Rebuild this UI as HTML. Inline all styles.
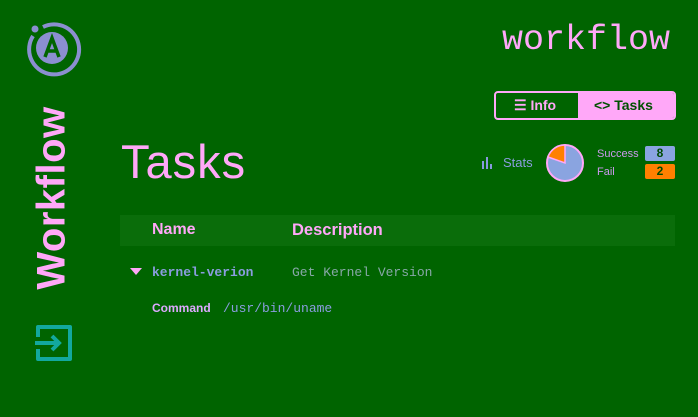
<!DOCTYPE html>
<html><head><style>
body{margin:0;width:698px;height:417px;background:#006400;overflow:hidden;position:relative;font-family:"Liberation Sans",sans-serif}
.a{position:absolute;white-space:nowrap}
.mono{font-family:"Liberation Mono",monospace}
</style></head><body>
<svg class="a" style="left:22px;top:18px" width="60" height="60" viewBox="0 0 60 60">
<path d="M11 18 A25 25 0 1 0 21 9" fill="none" stroke="#8b8fd0" stroke-width="4"/>
<circle cx="13" cy="11" r="3.5" fill="#8b8fd0"/>
<circle cx="30" cy="30" r="16" fill="#8b8fd0"/>
<path d="M23 39 L30 20 L37 39 M26 33 H34" fill="none" stroke="#006400" stroke-width="3.5"/>
</svg>
<div class="a" style="left:52px;top:198px;transform:translate(-50%,-50%) rotate(-90deg);color:#ffa8f8;font-weight:bold;font-size:40px;letter-spacing:0.5px">Workflow</div>
<svg class="a" style="left:35px;top:324px" width="38" height="38" viewBox="0 0 38 38">
<path d="M3 13 V3 H35 V35 H3 V25" fill="none" stroke="#13a89e" stroke-width="4" stroke-linejoin="round"/>
<path d="M0 19 H24 M17 12 L24 19 L17 26" fill="none" stroke="#13a89e" stroke-width="4"/>
</svg>
<div class="a mono" style="left:502px;top:19px;color:#ffa8f8;font-size:35px;line-height:42px">workflow</div>
<div class="a" style="left:494px;top:91px;width:178px;height:25px;border:2px solid #ffa8f8;border-radius:4px;overflow:hidden">
<div class="a" style="left:0;top:0;width:82px;height:25px;color:#ffa8f8;font-weight:bold;font-size:14px;line-height:25px"><span style="margin-left:18px">☰ Info</span></div>
<div class="a" style="left:82px;top:0;width:96px;height:25px;background:#ffa8f8;color:#005000;font-weight:bold;font-size:14px;line-height:25px"><span style="margin-left:16px">&lt;&gt; Tasks</span></div>
</div>
<div class="a" style="left:121px;top:136px;color:#ffa8f8;font-size:47px;font-weight:300;line-height:52px;letter-spacing:1px">Tasks</div>
<svg class="a" style="left:482px;top:156px" width="12" height="13"><rect x="0" y="5" width="2" height="8" fill="#8899dd"/><rect x="4" y="1" width="2" height="12" fill="#8899dd"/><rect x="8" y="8" width="2" height="5" fill="#8899dd"/></svg>
<div class="a" style="left:503px;top:155px;color:#8b9de0;font-size:13px">Stats</div>
<svg class="a" style="left:545px;top:143px" width="40" height="40" viewBox="0 0 40 40">
<circle cx="20" cy="20" r="18" fill="#8aa4e0" stroke="#ffa8f8" stroke-width="2"/>
<path d="M20 20 L20 2 A18 18 0 0 0 3 14 Z" fill="#ff8000" stroke="#ffa8f8" stroke-width="1.5"/>
</svg>
<div class="a" style="left:597px;top:148px;color:#cc99ee;font-size:11px">Success</div>
<div class="a" style="left:597px;top:166px;color:#cc99ee;font-size:11px">Fail</div>
<div class="a" style="left:645px;top:146px;width:30px;height:15px;background:#8aa4e0;border-radius:2px;color:#004a00;font-weight:bold;font-size:12px;text-align:center;line-height:15px">8</div>
<div class="a" style="left:645px;top:164px;width:30px;height:15px;background:#ff8000;border-radius:2px;color:#004a00;font-weight:bold;font-size:12px;text-align:center;line-height:15px">2</div>
<div class="a" style="left:120px;top:215px;width:555px;height:31px;background:#0a6d0a"></div>
<div class="a" style="left:152px;top:221px;color:#ffa8f8;font-weight:bold;font-size:16px">Name</div>
<div class="a" style="left:292px;top:221px;color:#ffa8f8;font-weight:bold;font-size:16.5px">Description</div>
<svg class="a" style="left:130px;top:268px" width="12" height="8"><path d="M0 0 H12 L6 7 Z" fill="#ffa8f8"/></svg>
<div class="a mono" style="left:152px;top:265px;color:#8b9de0;font-size:13px;font-weight:bold">kernel-verion</div>
<div class="a mono" style="left:292px;top:265px;color:#88a8a8;font-size:13px">Get Kernel Version</div>
<div class="a" style="left:152px;top:301px;color:#ddaaff;font-size:12px;font-weight:bold">Command</div>
<div class="a mono" style="left:223px;top:301px;color:#8b9de0;font-size:13px">/usr/bin/uname</div>
</body></html>
